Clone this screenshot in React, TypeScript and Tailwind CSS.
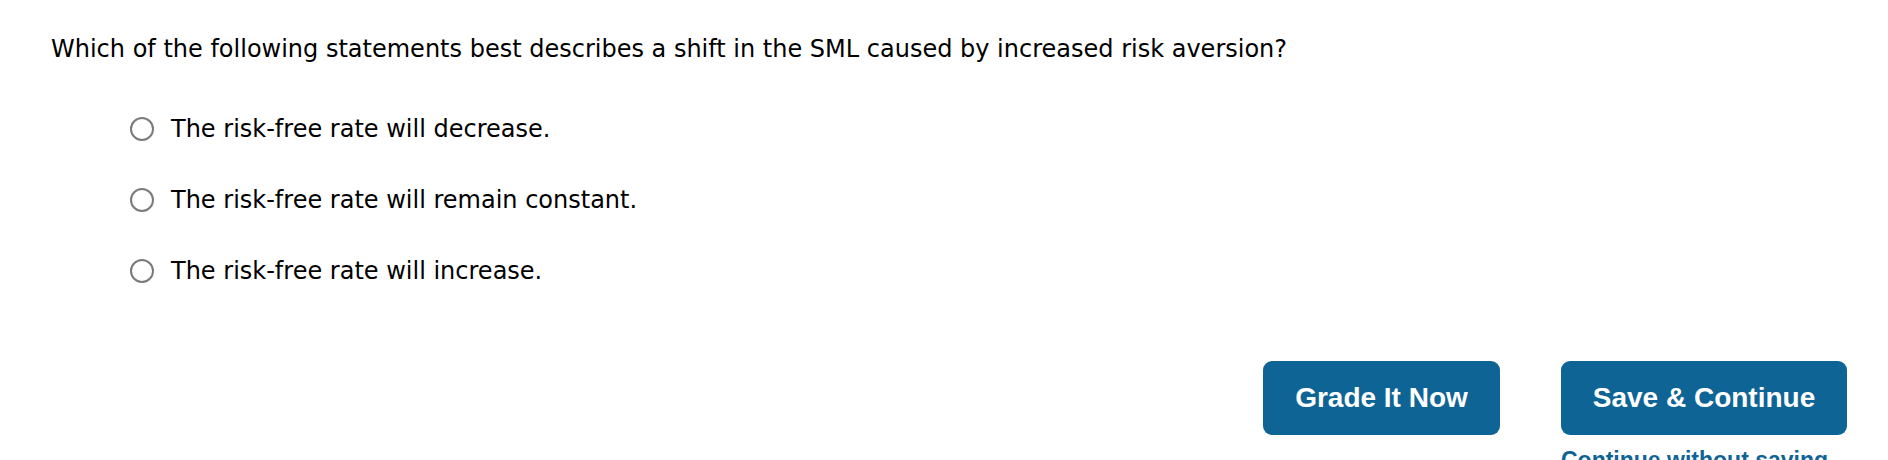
import { useState } from 'react';

const options = [
  'The risk-free rate will decrease.',
  'The risk-free rate will remain constant.',
  'The risk-free rate will increase.',
];

const App = () => {
  const [selected, setSelected] = useState<number | null>(null);

  return (
    <div className="bg-white min-h-[460px] pl-[51px] pr-[41px] pt-[33px] text-black font-['Verdana','DejaVu_Sans',sans-serif]">
      <p className="text-[24px] leading-[32px]">
        Which of the following statements best describes a shift in the SML caused by increased risk aversion?
      </p>

      <div className="mt-[48px] pl-[79px] flex flex-col gap-[39px]">
        {options.map((opt, i) => (
          <label key={opt} className="flex items-center gap-[17px] cursor-pointer text-[24px] leading-[32px]">
            <span
              onClick={() => setSelected(i)}
              className="w-[24px] h-[24px] rounded-full border-2 border-[#7a7a7a] bg-white flex items-center justify-center"
            >
              {selected === i && <span className="w-[12px] h-[12px] rounded-full bg-[#0f6496]" />}
            </span>
            <span>{opt}</span>
          </label>
        ))}
      </div>

      <div className="mt-[74px] flex justify-end gap-[61px]">
        <div className="flex flex-col">
          <button className="w-[237px] h-[74px] rounded-[9px] bg-[#0f6496] text-white text-[28px] font-bold font-['Liberation_Sans','Helvetica',sans-serif]">
            Grade It Now
          </button>
        </div>
        <div className="flex flex-col">
          <button className="w-[286px] h-[74px] rounded-[9px] bg-[#0f6496] text-white text-[28px] font-bold font-['Liberation_Sans','Helvetica',sans-serif]">
            Save &amp; Continue
          </button>
          <a className="mt-[8px] text-[23px] text-[#0f6496] font-bold font-['Liberation_Sans','Helvetica',sans-serif]">
            Continue without saving
          </a>
        </div>
      </div>
    </div>
  );
};

export default App;
